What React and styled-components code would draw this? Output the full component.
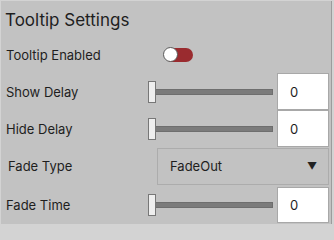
import React, { useState } from "react";
import styled, { createGlobalStyle } from "styled-components";

const GlobalStyle = createGlobalStyle`
  body {
    margin: 0;
    background: #d3d3d3;
    font-family: Inter, "Noto Sans", sans-serif;
    color: #1e1e1e;
  }
`;

const Panel = styled.div`
  box-sizing: border-box;
  margin: 1px 0 0 1px;
  width: 331px;
  height: 223px;
  background: #c2c2c2;
  border-right: 1px solid #9c9c9c;
  padding-right: 2px;
  display: flex;
  flex-direction: column;
`;

const Title = styled.h2`
  margin: 0;
  box-sizing: border-box;
  height: 35px;
  padding: 3px 0 0 4px;
  display: flex;
  align-items: center;
  font-size: 17px;
  font-weight: 400;
  color: #1e1e1e;
`;

const Row = styled.div`
  display: flex;
  align-items: center;
  height: ${(p) => p.$h}px;
  padding-left: 5px;
  margin-top: ${(p) => p.$mt || 0}px;
`;

const Label = styled.span`
  flex: 0 0 ${(p) => p.$w || 142}px;
  padding-left: ${(p) => p.$indent || 0}px;
  box-sizing: border-box;
  font-size: 13px;
  color: #1e1e1e;
`;

const Toggle = styled.div`
  position: relative;
  margin-left: 15px;
  width: 30px;
  height: 15px;
`;

const Track = styled.div`
  position: absolute;
  left: 2px;
  top: 1px;
  width: 28px;
  height: 14px;
  border-radius: 7px;
  background: #9a2b2f;
`;

const Knob = styled.div`
  position: absolute;
  left: 0;
  top: 0;
  box-sizing: border-box;
  width: 15px;
  height: 15px;
  border-radius: 50%;
  background: #ffffff;
  border: 1px solid #5a5a5a;
`;

const Slider = styled.div`
  position: relative;
  width: 125px;
  height: 22px;
  display: flex;
  align-items: center;
`;

const SliderTrack = styled.div`
  margin-left: 7px;
  flex: 1;
  height: 6px;
  box-sizing: border-box;
  background: #7b7b7b;
  border: 1px solid #6e6e6e;
`;

const Handle = styled.div`
  position: absolute;
  left: ${(p) => p.$pos}px;
  top: 0;
  box-sizing: border-box;
  width: 8px;
  height: 22px;
  background: #eeeeee;
  border: 1px solid #777777;
`;

const NumberBox = styled.div`
  box-sizing: border-box;
  margin-left: 4px;
  width: 52px;
  height: ${(p) => p.$h || 37}px;
  background: #ffffff;
  border: 1px solid #a8a8a8;
  padding-left: 12px;
  display: flex;
  align-items: center;
  font-size: 13px;
  color: #1e1e1e;
`;

const Dropdown = styled.div`
  box-sizing: border-box;
  margin-left: 9px;
  width: 172px;
  height: 37px;
  background: #c2c2c2;
  border: 1px solid #acacac;
  padding: 0 11px 0 12px;
  display: flex;
  align-items: center;
  justify-content: space-between;
  font-size: 13px;
  color: #1e1e1e;
`;

const Arrow = styled.span`
  font-size: 10px;
  color: #222;
`;

const SliderRow = ({ label, value, h, mt }) => (
  <Row $h={h} $mt={mt}>
    <Label>{label}</Label>
    <Slider>
      <Handle $pos={0} />
      <SliderTrack />
    </Slider>
    <NumberBox $h={h}>{value}</NumberBox>
  </Row>
);

export default function App() {
  const [fade] = useState("FadeOut");
  return (
    <>
      <GlobalStyle />
      <Panel>
        <Title>Tooltip Settings</Title>
        <Row $h={37}>
          <Label>Tooltip Enabled</Label>
          <Toggle>
            <Track />
            <Knob />
          </Toggle>
        </Row>
        <SliderRow label="Show Delay" value="0" h={37} />
        <SliderRow label="Hide Delay" value="0" h={37} />
        <Row $h={36} $mt={1}>
          <Label $indent={2}>Fade Type</Label>
          <Dropdown>
            <span>{fade}</span>
            <Arrow>▼</Arrow>
          </Dropdown>
        </Row>
        <SliderRow label="Fade Time" value="0" h={36} mt={3} />
      </Panel>
    </>
  );
}
